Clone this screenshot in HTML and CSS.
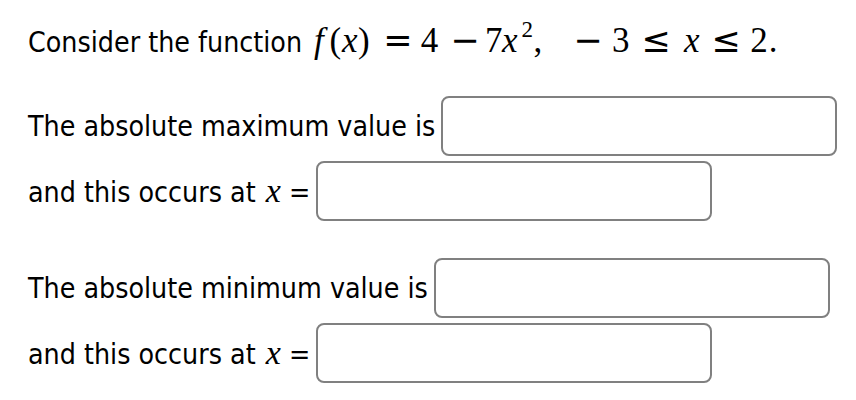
FILE: index.html
```html
<!DOCTYPE html>
<html>
<head>
<meta charset="utf-8">
<link rel="stylesheet" href="styles.css">
</head>
<body>
<div class="question">
  <p class="prompt"><span class="lead">Consider the function</span><span class="math"><i class="t m-f">f</i><span class="t m-lp">(</span><i class="t m-x1">x</i><span class="t m-rp">)</span><span class="t op m-eq">=</span><span class="t m-4">4</span><span class="t op m-minus">−</span><span class="t m-7">7</span><i class="t m-x2">x</i><span class="t sup">2</span><span class="t m-cm">,</span><span class="t op m-neg">−</span><span class="t m-3">3</span><span class="t op m-le1">≤</span><i class="t m-x3">x</i><span class="t op m-le2">≤</span><span class="t m-2">2</span><span class="t m-dot">.</span></span></p>
  <div class="group">
    <div class="row"><span class="label">The absolute maximum value is</span><span class="box"></span></div>
    <div class="row"><span class="label">and this occurs at <i class="mx">x</i> =</span><span class="box"></span></div>
  </div>
  <div class="group">
    <div class="row"><span class="label">The absolute minimum value is</span><span class="box"></span></div>
    <div class="row"><span class="label">and this occurs at <i class="mx">x</i> =</span><span class="box"></span></div>
  </div>
</div>
</body>
</html>
```
FILE: styles.css
```css
html, body {
  margin: 0;
  padding: 0;
  background: #fff;
}
.question {
  padding: 20px 0 0 28px;
  font-family: "DejaVu Sans Condensed", "DejaVu Sans", sans-serif;
  font-size: 28.3px;
  color: #000;
}
.prompt {
  display: flex;
  align-items: baseline;
  margin: 0 0 31px 0;
  line-height: 40px;
}
.lead {
  margin-right: 12px;
}
.math {
  display: inline-flex;
  align-items: baseline;
  font-family: "Liberation Serif", serif;
  font-size: 35px;
}
.t { display: inline-block; }
i.t, .mx {
  font-family: "Liberation Serif", serif;
  font-style: italic;
}
.op {
  font-family: "DejaVu Sans", sans-serif;
}
.mx {
  font-size: 34px;
  margin-left: 2px;
}
.m-lp { margin-left: 5.6px; }
.m-x1 { margin-left: 1px; }
.m-rp { margin-left: 0.5px; }
.m-eq { margin-left: 13.6px; }
.m-4 { margin-left: 8px; }
.m-minus { margin-left: 12.2px; }
.m-7 { margin-left: 5.2px; }
.m-x2 { margin-left: -0.3px; }
.sup {
  font-size: 23px;
  position: relative;
  top: -15px;
  margin-left: 3.8px;
}
.m-cm { margin-left: 0.7px; }
.m-neg { margin-left: 31px; }
.m-3 { margin-left: 9.4px; }
.m-le1 { margin-left: 11.6px; }
.m-x3 { margin-left: 13.6px; }
.m-le2 { margin-left: 11.6px; }
.m-2 { margin-left: 9.6px; }
.m-dot { margin-left: 1px; }
.group {
  display: flex;
  flex-direction: column;
  gap: 5px;
  margin-bottom: 37px;
}
.row {
  display: flex;
  align-items: center;
  gap: 6px;
}
.box {
  display: block;
  width: 392px;
  height: 56px;
  border: 2px solid #808080;
  border-radius: 8px;
  background: #fff;
}
```
